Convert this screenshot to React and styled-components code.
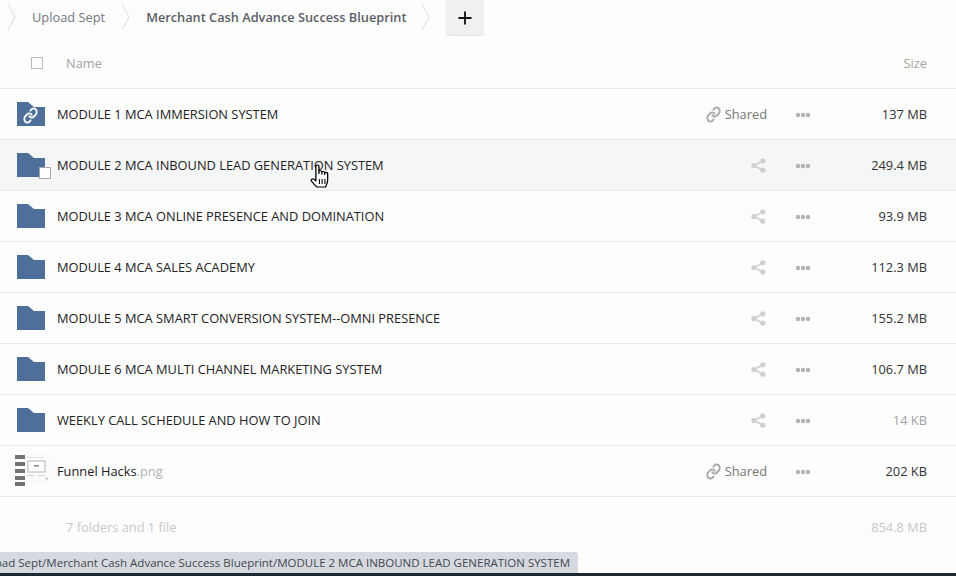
import React from 'react';
import styled, { createGlobalStyle } from 'styled-components';
import { Plus } from 'lucide-react';

const rows = [
  { name: 'MODULE 1 MCA IMMERSION SYSTEM', size: '137 MB', shared: true, linked: true },
  { name: 'MODULE 2 MCA INBOUND LEAD GENERATION SYSTEM', size: '249.4 MB', hover: true },
  { name: 'MODULE 3 MCA ONLINE PRESENCE AND DOMINATION', size: '93.9 MB' },
  { name: 'MODULE 4 MCA SALES ACADEMY', size: '112.3 MB' },
  { name: 'MODULE 5 MCA SMART CONVERSION SYSTEM--OMNI PRESENCE', size: '155.2 MB' },
  { name: 'MODULE 6 MCA MULTI CHANNEL MARKETING SYSTEM', size: '106.7 MB' },
  { name: 'WEEKLY CALL SCHEDULE AND HOW TO JOIN', size: '14 KB', muted: true },
  { name: 'Funnel Hacks', ext: '.png', size: '202 KB', shared: true, file: true },
];

const Chevron = () => (
  <ChevronSvg width="9" height="28" viewBox="0 0 9 28">
    <path d="M1 1l7 13-7 13" fill="none" stroke="#dcdcdc" strokeWidth="1" />
  </ChevronSvg>
);

const Folder = () => (
  <svg width="28" height="24" viewBox="0 0 28 24">
    <path d="M0 0h11l6 5h11v19H0z" fill="#4f6f9b" />
  </svg>
);

const Thumb = () => (
  <svg width="34" height="34" viewBox="0 0 34 34">
    <rect x="8" y="0" width="26" height="32" fill="#fafafa" />
    <g fill="#737373">
      <rect x="0" y="1" width="10" height="4" />
      <rect x="0" y="8" width="10" height="4" />
      <rect x="0" y="15" width="10" height="4" />
      <rect x="0" y="22" width="10" height="4" />
      <rect x="0" y="28" width="10" height="4" />
    </g>
    <rect x="13" y="7" width="17" height="11" fill="#fff" stroke="#b4b4b4" />
    <rect x="19" y="11" width="5" height="1.5" fill="#8a8a8a" />
    <rect x="13" y="3" width="16" height="1" fill="#e2e2e2" />
    <rect x="13" y="21" width="7" height="1" fill="#d4d4d4" />
    <rect x="23" y="21" width="7" height="1" fill="#d4d4d4" />
    <rect x="31" y="24" width="1.5" height="1.5" fill="#999" />
  </svg>
);

const Chain = ({ color }) => (
  <svg width="15" height="17" viewBox="0 0 24 24" preserveAspectRatio="none">
    <g fill="none" stroke={color} strokeWidth="2.800" strokeLinecap="round">
      <path d="M10 13a5 5 0 0 0 7.540.540l3-3a5 5 0 0 0-7.070-7.070l-1.720 1.710" />
      <path d="M14 11a5 5 0 0 0-7.540-.540l-3 3a5 5 0 0 0 7.070 7.070l1.710-1.710" />
    </g>
  </svg>
);

const Dots = () => (
  <svg width="16" height="6" viewBox="0 0 16 6">
    <g fill="#b3b3b3">
      <circle cx="3" cy="3" r="2.2" />
      <circle cx="8" cy="3" r="2.2" />
      <circle cx="13" cy="3" r="2.2" />
    </g>
  </svg>
);

const ShareIcon = () => (
  <svg width="15" height="15" viewBox="0 0 15 15">
    <path d="M11.5 3L3 7.5l8.5 4.5" fill="none" stroke="#d0d0d0" strokeWidth="1.6" />
    <g fill="#d0d0d0">
      <circle cx="11.8" cy="2.8" r="2.6" />
      <circle cx="2.9" cy="7.5" r="2.6" />
      <circle cx="11.8" cy="12.2" r="2.6" />
    </g>
  </svg>
);

const HandCursor = () => (
  <svg width="20" height="24" viewBox="0 0 17 24" preserveAspectRatio="none">
    <path
      d="M5 12V2.2C5 .6 7.6.6 7.6 2.2V9.5V7.8c0-1.500 2.500-1.500 2.500 0V10V8.600c0-1.500 2.400-1.500 2.400 0v1.900-1c0-1.500 2.500-1.500 2.500 0v6.500c0 3-1.200 5.500-1.800 7H5.800C4.500 21.500 2.800 19.600 1.300 17.300c-1-1.600.8-3.200 2.200-1.900L5 16.800z"
      fill="#fff"
      stroke="#000"
      strokeWidth="1.100"
      strokeLinejoin="round"
    />
    <path d="M8 15v5M10.300 15v5M12.700 15v5" stroke="#000" strokeWidth=".9" />
  </svg>
);

export default function App() {
  return (
    <Page>
      <GlobalStyle />
      <Crumbs>
        <Chevron />
        <Crumb>Upload Sept</Crumb>
        <Chevron />
        <Crumb $current>Merchant Cash Advance Success Blueprint</Crumb>
        <Chevron />
        <AddButton><Plus size={20} color="#111" strokeWidth={2.2} /></AddButton>
      </Crumbs>
      <HeadRow>
        <HeadCheck />
        <HeadLabel>Name</HeadLabel>
        <HeadLabel>Size</HeadLabel>
      </HeadRow>
      <div>
        {rows.map((row) => (
          <Row key={row.name} $hover={row.hover}>
            <IconCell>
              {row.file ? <Thumb /> : <Folder />}
              {row.linked && (
                <FolderLink><Chain color="#fff" /></FolderLink>
              )}
              {row.hover && <RowCheck />}
            </IconCell>
            <Name>{row.name}{row.ext && <Ext>{row.ext}</Ext>}</Name>
            <ShareCell>
              {row.shared ? (
                <Shared><Chain color="#a6a6a6" />Shared</Shared>
              ) : (
                <ShareGlyph><ShareIcon /></ShareGlyph>
              )}
            </ShareCell>
            <DotsCell><Dots /></DotsCell>
            <Size $muted={row.muted}>{row.size}</Size>
          </Row>
        ))}
      </div>
      <Footer>
        <span>7 folders and 1 file</span>
        <span>854.8 MB</span>
      </Footer>
      <StatusTip>Upload Sept/Merchant Cash Advance Success Blueprint/MODULE 2 MCA INBOUND LEAD GENERATION SYSTEM</StatusTip>
      <BottomStrip />
      <CursorWrap><HandCursor /></CursorWrap>
    </Page>
  );
}

const GlobalStyle = createGlobalStyle`
  html, body {
    margin: 0;
    padding: 0;
    background: #fdfdfe;
  }
`;

const Page = styled.div`
  position: relative;
  width: 956px;
  height: 576px;
  overflow: hidden;
  background: #fdfdfe;
  font-family: "Open Sans", "Liberation Sans", sans-serif;
  font-size: 12.83px;
  color: #222;
`;

const Crumbs = styled.div`
  display: flex;
  align-items: center;
  height: 36px;
  padding: 0 0 2px 7px;
  box-sizing: border-box;
`;

const ChevronSvg = styled.svg`
  flex: none;
`;

const Crumb = styled.span`
  margin: 0 ${(p) => (p.$current ? '15px' : '16px')} 0 16px;
  color: ${(p) => (p.$current ? '#5b5f66' : '#73777d')};
  font-size: ${(p) => (p.$current ? '12.78px' : 'inherit')};
  font-weight: ${(p) => (p.$current ? 600 : 400)};
  white-space: nowrap;
`;

const AddButton = styled.div`
  display: flex;
  align-items: center;
  justify-content: center;
  align-self: flex-start;
  width: 38px;
  height: 35px;
  margin-left: 16px;
  background: #f0f0f0;
  border-radius: 0 0 3px 3px;
  box-shadow: 0 1px 1px #e4e4e4;
`;

const HeadRow = styled.div`
  display: flex;
  align-items: center;
  justify-content: space-between;
  height: 53px;
  padding: 2px 29px 0 31px;
  border-bottom: 1px solid #e8e8e8;
  box-sizing: border-box;
`;

const HeadCheck = styled.div`
  width: 10px;
  height: 10px;
  border: 1px solid #bdbdbd;
  margin-right: 23px;
`;

const HeadLabel = styled.span`
  color: #a3a3a3;
  &:nth-child(2) {
    flex: 1;
  }
`;

const Row = styled.div`
  display: grid;
  grid-template-columns: 57px 1fr 100px 72px 88px;
  align-items: center;
  height: 51px;
  padding-right: 29px;
  box-sizing: border-box;
  border-bottom: 1px solid #e8e8e8;
  background: ${(p) => (p.$hover ? '#f5f6f7' : 'transparent')};
`;

const IconCell = styled.div`
  position: relative;
  display: flex;
  align-items: center;
  padding-left: 17px;
  svg {
    display: block;
  }
  & > svg[height="34"] {
    margin-left: -2px;
  }
`;

const FolderLink = styled.span`
  position: absolute;
  left: 23px;
  top: 5px;
`;

const RowCheck = styled.span`
  position: absolute;
  left: 39px;
  top: 14px;
  width: 10px;
  height: 10px;
  background: #fff;
  border: 1px solid #a8a8a8;
`;

const Name = styled.div`
  color: #222;
  white-space: nowrap;
`;

const Ext = styled.span`
  color: #b4b4b4;
`;

const ShareCell = styled.div`
  display: flex;
  justify-content: flex-end;
`;

const ShareGlyph = styled.span`
  display: flex;
  padding-right: 1px;
`;

const Shared = styled.span`
  display: flex;
  align-items: center;
  gap: 4px;
  color: #777;
`;

const DotsCell = styled.div`
  display: flex;
  justify-content: center;
  padding-top: 2px;
`;

const Size = styled.div`
  text-align: right;
  color: ${(p) => (p.$muted ? '#a3a3a3' : '#333')};
`;

const Footer = styled.div`
  display: flex;
  justify-content: space-between;
  align-items: center;
  height: 60px;
  padding: 0 29px 0 66px;
  color: #c8c8c8;
`;

const StatusTip = styled.div`
  position: absolute;
  right: 378px;
  bottom: 3px;
  height: 21px;
  line-height: 21px;
  padding: 0 8px 0 0;
  background: #d6d9e0;
  border-radius: 0 3px 0 0;
  color: #44474d;
  font-size: 11.5px;
  white-space: nowrap;
`;

const BottomStrip = styled.div`
  position: absolute;
  left: 0;
  right: 0;
  bottom: 0;
  height: 3px;
  background: #1d2a36;
`;

const CursorWrap = styled.div`
  position: absolute;
  left: 310px;
  top: 164px;
  line-height: 0;
`;
